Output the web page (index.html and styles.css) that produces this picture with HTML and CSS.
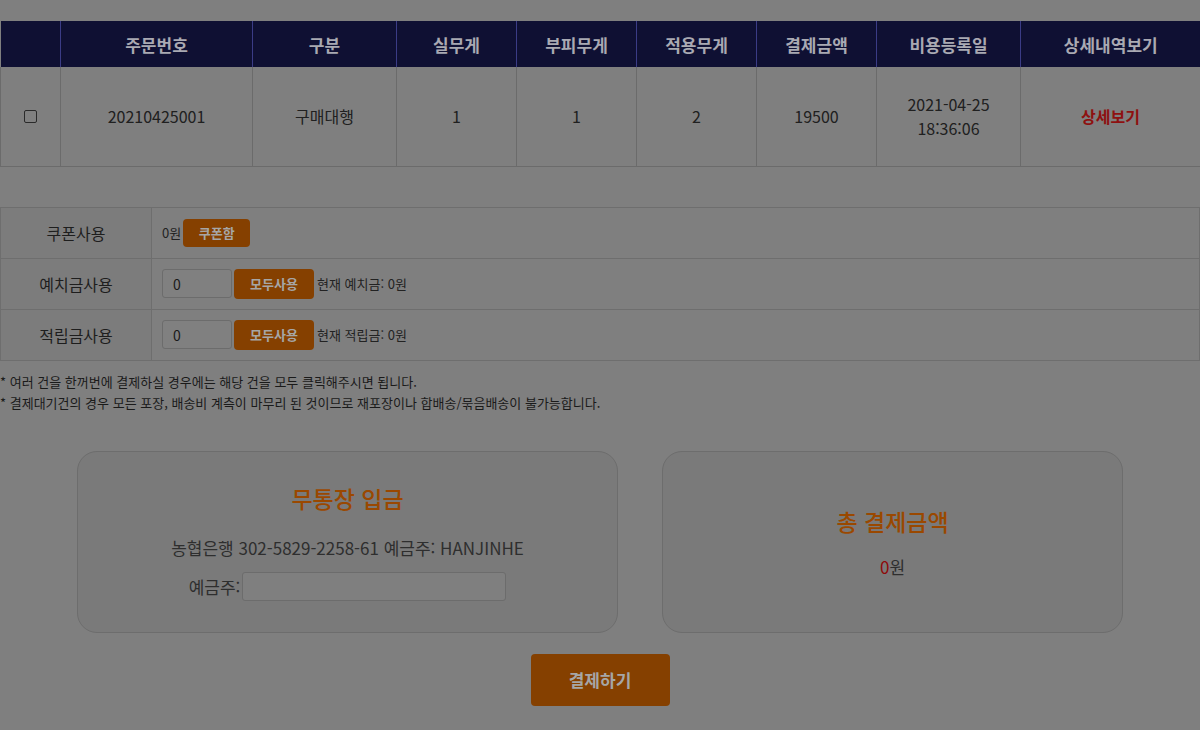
FILE: index.html
```html
<!DOCTYPE html>
<html lang="ko">
<head>
<meta charset="utf-8">
<title>결제</title>
<link rel="stylesheet" href="styles.css">
</head>
<body>
<div class="page">
  <table class="orders">
    <colgroup>
      <col class="c-chk"><col class="c-no"><col class="c-type"><col class="c-w"><col class="c-w"><col class="c-w"><col class="c-w"><col class="c-date"><col class="c-view">
    </colgroup>
    <thead>
      <tr>
        <th></th><th>주문번호</th><th>구분</th><th>실무게</th><th>부피무게</th><th>적용무게</th><th>결제금액</th><th>비용등록일</th><th>상세내역보기</th>
      </tr>
    </thead>
    <tbody>
      <tr>
        <td><input type="checkbox" class="chk"></td>
        <td>20210425001</td>
        <td>구매대행</td>
        <td>1</td>
        <td>1</td>
        <td>2</td>
        <td>19500</td>
        <td class="date">2021-04-25<br>18:36:06</td>
        <td><a class="detail">상세보기</a></td>
      </tr>
    </tbody>
  </table>

  <table class="usage">
    <tr>
      <th>쿠폰사용</th>
      <td><div class="cell"><span>0원</span><button class="btn-sm">쿠폰함</button></div></td>
    </tr>
    <tr>
      <th>예치금사용</th>
      <td><div class="cell"><input class="num" type="text" value="0"><button class="btn-md">모두사용</button><span class="cur">현재 예치금: 0원</span></div></td>
    </tr>
    <tr>
      <th>적립금사용</th>
      <td><div class="cell"><input class="num" type="text" value="0"><button class="btn-md">모두사용</button><span class="cur">현재 적립금: 0원</span></div></td>
    </tr>
  </table>

  <div class="notes">
    <p>* 여러 건을 한꺼번에 결제하실 경우에는 해당 건을 모두 클릭해주시면 됩니다.</p>
    <p>* 결제대기건의 경우 모든 포장, 배송비 계측이 마무리 된 것이므로 재포장이나 합배송/묶음배송이 불가능합니다.</p>
  </div>

  <div class="cards">
    <div class="card card-bank">
      <h2 class="card-title">무통장 입금</h2>
      <p class="bank">농협은행 302-5829-2258-61 예금주: HANJINHE</p>
      <div class="depositor"><label>예금주:</label><input class="name" type="text"></div>
    </div>
    <div class="card card-total">
      <h2 class="card-title">총 결제금액</h2>
      <p class="total"><span class="zero">0</span>원</p>
    </div>
  </div>

  <div class="pay-wrap"><button class="pay">결제하기</button></div>
</div>
</body>
</html>
```

FILE: styles.css
```css
* { box-sizing: border-box; }
html, body { margin: 0; padding: 0; }
body {
  background: #7f7f7f;
  font-family: "Noto Sans CJK KR", "Noto Sans", sans-serif;
  color: #1c1c1c;
  width: 1200px;
  height: 730px;
  overflow: hidden;
}
.page { padding-top: 21px; }

.orders {
  width: 1200px;
  border-collapse: collapse;
  table-layout: fixed;
}
.c-chk { width: 60px; }
.c-no { width: 192px; }
.c-type { width: 144px; }
.c-w { width: 120px; }
.c-date { width: 144px; }
.c-view { width: 180px; }
.orders th {
  background: #0f1033;
  color: #a9a9b2;
  font-size: 17px;
  font-weight: 700;
  height: 46px;
  padding: 0;
  border-left: 1px solid #3b3c86;
  text-align: center;
}
.orders th:first-child { border-left: none; }
.orders td {
  height: 99px;
  padding: 0;
  text-align: center;
  font-size: 16px;
  color: #202020;
  border: 1px solid #6b6b6b;
  border-top: none;
}
.orders td.date { line-height: 24px; }
.chk {
  appearance: none;
  -webkit-appearance: none;
  width: 13px;
  height: 13px;
  margin: 4px 0 0;
  border: 1px solid #2a2a2a;
  border-radius: 2px;
  background: #808080;
}
.detail {
  color: #8e1010;
  font-weight: 700;
}

.usage {
  width: 1200px;
  margin-top: 40px;
  border-collapse: collapse;
}
.usage th {
  width: 151px;
  height: 51px;
  background: #7c7c7c;
  font-size: 16px;
  font-weight: 400;
  color: #1e1e1e;
  border: 1px solid #6e6e6e;
  padding: 0;
}
.usage td {
  border: 1px solid #6e6e6e;
  padding: 0 0 0 10px;
  font-size: 13px;
  color: #222;
}
.cell {
  display: flex;
  align-items: center;
  gap: 2px;
}
.btn-sm, .btn-md {
  border: none;
  background: #854000;
  color: #a6a6a6;
  font-family: inherit;
  font-weight: 700;
  font-size: 13px;
  border-radius: 4px;
  padding: 0;
}
.btn-sm { width: 67px; height: 28px; }
.btn-md { width: 80px; height: 30px; }
.num {
  width: 70px;
  height: 29px;
  border: 1px solid #6c6c6c;
  border-radius: 3px;
  background: #808080;
  font-family: inherit;
  font-size: 14px;
  color: #1a1a1a;
  padding: 0 0 0 10px;
}
.cur { margin-left: 1px; }

.notes { margin-top: 10px; }
.notes p {
  margin: 0;
  font-size: 13px;
  line-height: 21px;
  color: #1a1a1a;
}

.cards {
  display: flex;
  gap: 44px;
  width: 1046px;
  margin: 38px auto 0;
}
.card {
  border: 1px solid #6d6d6d;
  border-radius: 20px;
  background: #7a7a7a;
  display: flex;
  flex-direction: column;
  align-items: center;
}
.card-bank { width: 541px; height: 182px; padding-top: 29px; }
.card-total { width: 461px; height: 182px; justify-content: center; }
.card-title {
  margin: 0;
  font-size: 23px;
  line-height: 34px;
  font-weight: 500;
  color: #9a4800;
}
.bank {
  margin: 21px 0 0;
  font-size: 17px;
  line-height: 24px;
  color: #2e2e2e;
}
.depositor {
  margin-top: 12px;
  display: flex;
  align-items: center;
  gap: 2px;
  font-size: 17px;
  color: #2e2e2e;
}
.name {
  width: 264px;
  height: 29px;
  border: 1px solid #6c6c6c;
  border-radius: 3px;
  background: #7f7f7f;
}
.total {
  margin: 17px 0 0;
  font-size: 17px;
  line-height: 24px;
  color: #2e2e2e;
}
.zero { color: #8e0a0a; }

.pay-wrap {
  display: flex;
  justify-content: center;
  margin-top: 21px;
}
.pay {
  width: 139px;
  height: 52px;
  border: none;
  border-radius: 4px;
  background: #854000;
  color: #a6a6a6;
  font-family: inherit;
  font-size: 17px;
  font-weight: 700;
}
```
